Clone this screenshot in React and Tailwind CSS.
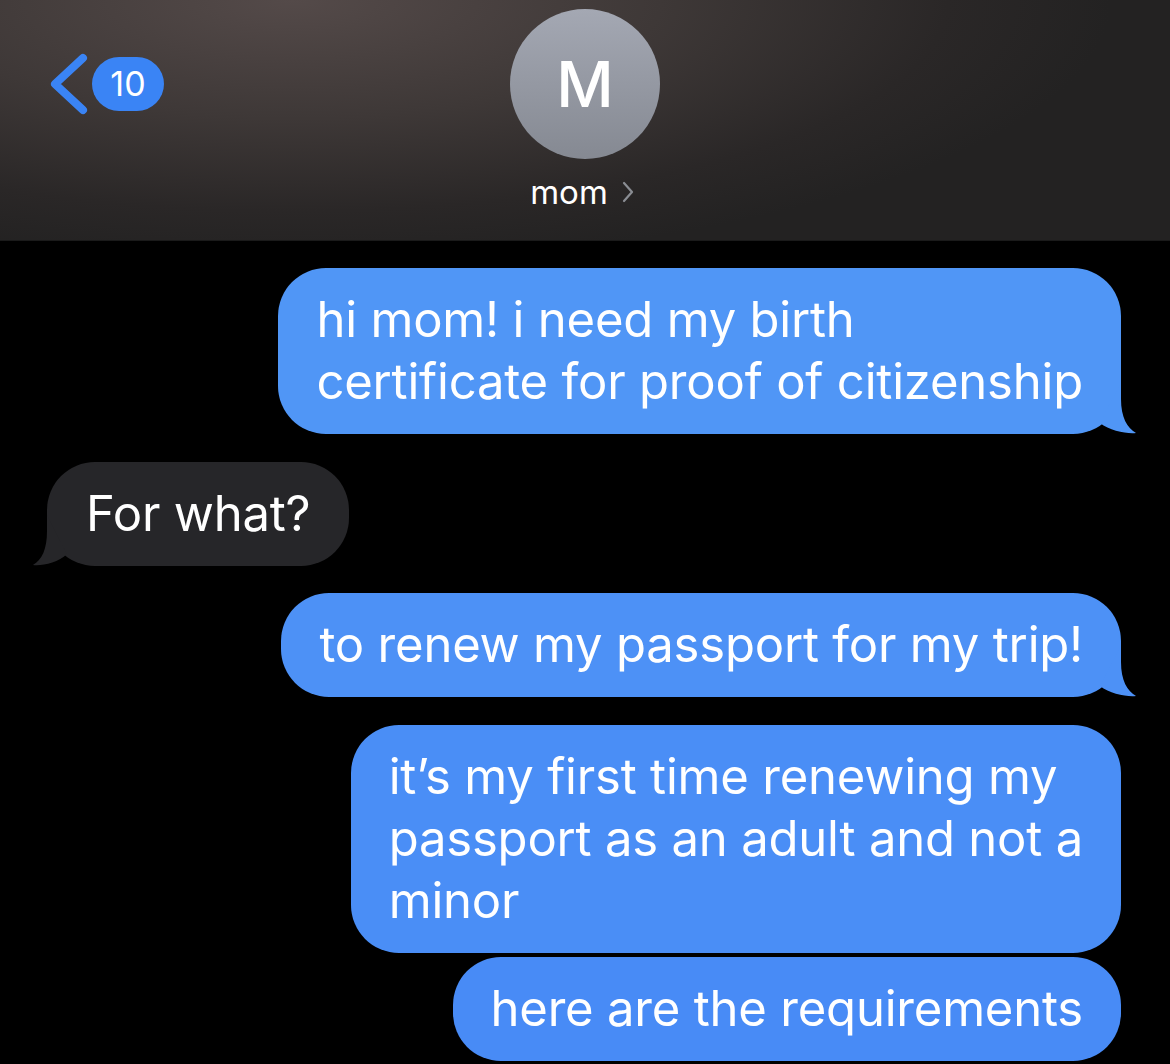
import { useState } from 'react'

// iMessage-style thread: header with contact avatar, then bubbles.
const MESSAGES = [
  { id: 1, me: true, tail: true, color: 'bg-[#5096f6]', fill: '#5096f6', lines: ['hi mom! i need my birth', 'certificate for proof of citizenship'] },
  { id: 2, me: false, tail: true, lines: ['For what?'] },
  { id: 3, me: true, tail: true, color: 'bg-[#4d91f6]', fill: '#4d91f6', lines: ['to renew my passport for my trip!'] },
  { id: 4, me: true, tail: false, color: 'bg-[#4a8ef6]', lines: ['it’s my first time renewing my', 'passport as an adult and not a', 'minor'] },
  { id: 5, me: true, tail: false, color: 'bg-[#488bf6]', lines: ['here are the requirements'] },
]

function RightTail({ fill }) {
  return (
    <svg className="absolute right-[-17px] bottom-0" width="45" height="55" viewBox="0 0 45 55">
      <path d="M28 4 L28 20 C28 38 34 49 43 54 C34 55 17 52 7 44 L14 30 Z" fill={fill} />
    </svg>
  )
}

function LeftTail() {
  return (
    <svg className="absolute left-[-15px] bottom-0" width="45" height="55" viewBox="0 0 45 55">
      <path d="M15 4 L15 20 C15 38 10 49 1 54 C10 55 26 52 35 43 L28 30 Z" fill="#262629" />
    </svg>
  )
}

function Bubble({ msg }) {
  if (!msg.me) {
    return (
      <div className="flex justify-start pl-[47px]">
        <div className="relative rounded-[48px] bg-[#262629] px-[39px] py-[21px] text-white">
          {msg.lines.map((l, i) => <div key={i}>{l}</div>)}
          {msg.tail && <LeftTail />}
        </div>
      </div>
    )
  }
  return (
    <div className="flex justify-end pr-[49px]">
      <div className={`relative rounded-[48px] px-[38px] py-[21px] text-white ${msg.color}`}>
        {msg.lines.map((l, i) => <div key={i} className="whitespace-nowrap">{l}</div>)}
        {msg.tail && <RightTail fill={msg.fill} />}
      </div>
    </div>
  )
}

export default function App() {
  const [unread] = useState(10)

  return (
    <div className="h-[1064px] overflow-hidden bg-black font-['Inter','Noto_Sans',sans-serif]">
      <header className="relative h-[241px] border-b border-[#1a1a1a] bg-[radial-gradient(ellipse_70%_110%_at_25%_0%,#544a49_0%,#3e3837_45%,#2a2727_80%,#232222_100%)]">
        <div className="absolute left-[49px] top-[53px] flex items-center gap-[3px]">
          <svg width="40" height="62" viewBox="0 0 40 62">
            <path d="M34 5 L6 31 L34 57" fill="none" stroke="#3a84f5" strokeWidth="8" strokeLinecap="round" strokeLinejoin="round" />
          </svg>
          <div className="flex h-[54px] w-[72px] items-center justify-center rounded-full bg-[#3a84f5] text-[34px] leading-none text-white">
            {unread}
          </div>
        </div>
        <div className="flex flex-col items-center pt-[9px]">
          <div className="flex h-[150px] w-[150px] items-center justify-center rounded-full bg-[linear-gradient(#a4a8b3,#858992)] text-[63px] font-medium text-white">
            M
          </div>
          <div className="mt-[13px] mr-[6px] flex items-center gap-[14px] text-[33px] leading-[40px] text-white">
            <span>mom</span>
            <svg width="12" height="22" viewBox="0 0 12 22">
              <path d="M2 2 L10 11 L2 20" fill="none" stroke="#8a8d93" strokeWidth="2.2" strokeLinecap="round" strokeLinejoin="round" />
            </svg>
          </div>
        </div>
      </header>

      <main className="flex flex-col pt-[27px] text-[49px] leading-[62px] tracking-[-0.2px]">
        <Bubble msg={MESSAGES[0]} />
        <div className="h-[28px]" />
        <Bubble msg={MESSAGES[1]} />
        <div className="h-[27px]" />
        <Bubble msg={MESSAGES[2]} />
        <div className="h-[28px]" />
        <Bubble msg={MESSAGES[3]} />
        <div className="h-[4px]" />
        <Bubble msg={MESSAGES[4]} />
        <div className="flex justify-end pr-[49px] pt-[4px]">
          <div className="h-[40px] w-[600px] rounded-t-[40px] bg-[#f4f1e6]" />
        </div>
      </main>
    </div>
  )
}
